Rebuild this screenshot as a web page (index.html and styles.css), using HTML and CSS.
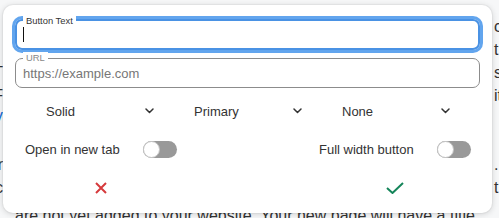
FILE: index.html
```html
<!DOCTYPE html>
<html>
<head>
<meta charset="utf-8">
<link rel="stylesheet" href="styles.css">
</head>
<body>
<div class="page">
  <div class="ln"><span class="l"></span><span class="r">c</span></div>
  <div class="ln"><span class="l"></span><span class="r">t</span></div>
  <div class="ln"><span class="l">T</span><span class="r">si</span></div>
  <div class="ln"><span class="l">F</span><span class="r">it</span></div>
  <div class="ln"><span class="l link">V</span><span class="r"></span></div>
  <div class="ln"><span class="l"></span><span class="r"></span></div>
  <div class="ln"><span class="l">r</span><span class="r">.</span></div>
  <div class="ln"><span class="l">c</span><span class="r">t</span></div>
  <div class="ln last">are not yet added to your website. Your new page will have a title</div>
</div>

<div class="card">
  <div class="field">
    <span class="flabel">Button Text</span>
    <div class="box focused"><span class="caret"></span></div>
  </div>
  <div class="field url">
    <span class="flabel muted">URL</span>
    <div class="box"><span class="ph">https://example.com</span></div>
  </div>

  <div class="selects">
    <div class="sel"><span>Solid</span><svg class="chev" width="9" height="6" viewBox="0 0 9 6"><polyline points="1,1 4.5,4.5 8,1" /></svg></div>
    <div class="sel"><span>Primary</span><svg class="chev" width="9" height="6" viewBox="0 0 9 6"><polyline points="1,1 4.5,4.5 8,1" /></svg></div>
    <div class="sel"><span>None</span><svg class="chev" width="9" height="6" viewBox="0 0 9 6"><polyline points="1,1 4.5,4.5 8,1" /></svg></div>
  </div>

  <div class="pair toggles">
    <div class="tg"><span>Open in new tab</span><span class="switch"><span class="knob"></span></span></div>
    <div class="tg"><span>Full width button</span><span class="switch"><span class="knob"></span></span></div>
  </div>

  <div class="pair actions">
    <div class="act"><svg width="12" height="12" viewBox="0 0 12 12"><path class="x" d="M1 1 L11 11 M11 1 L1 11" /></svg></div>
    <div class="act"><svg width="18" height="12" viewBox="0 0 18 12"><polyline class="ok" points="1,6 6.5,11 17,1" /></svg></div>
  </div>
</div>
</body>
</html>
```

FILE: styles.css
```css
html, body {
  margin: 0;
  padding: 0;
}
body {
  width: 499px;
  height: 218px;
  overflow: hidden;
  background: #f6f7f8;
  font-family: "Liberation Sans", Arial, sans-serif;
  color: #333;
  position: relative;
}
.page {
  padding-top: 15px;
  font-size: 16px;
  line-height: 23px;
  color: #333;
}
.ln {
  display: flex;
  white-space: nowrap;
  height: 23px;
}
.ln .l {
  width: 3px;
  display: flex;
  justify-content: flex-end;
  flex: none;
}
.ln .r {
  margin-left: 491px;
}
.link {
  color: #1a6fd8;
}
.ln.last {
  padding-left: 15px;
  margin-top: 5px;
}

.card {
  position: absolute;
  left: 3px;
  top: 5px;
  width: 489px;
  box-sizing: border-box;
  padding: 14px 12px 9px;
  background: #fff;
  border-radius: 10px;
  box-shadow: 0 1px 6px rgba(0, 0, 0, 0.16), 0 0 0 1px rgba(0, 0, 0, 0.03);
}

.field {
  position: relative;
}
.field.url {
  margin-top: 8px;
}
.box {
  box-sizing: border-box;
  height: 30px;
  border: 1px solid #8c8c8c;
  border-radius: 7px;
  display: flex;
  align-items: center;
  padding-left: 7px;
}
.box.focused {
  height: 31px;
  border: 2px solid #4a92e4;
  box-shadow: 0 0 0 3px #62a5ee;
  padding-left: 6px;
}
.caret {
  width: 1px;
  height: 15px;
  background: #111;
}
.ph {
  font-size: 13px;
  color: #777;
}
.flabel {
  position: absolute;
  left: 8px;
  top: -4px;
  padding: 0 3px;
  background: #fff;
  font-size: 9.4px;
  line-height: 11px;
  color: #333;
}
.flabel.muted {
  top: -6px;
  color: #888;
}

.selects {
  margin-top: 8px;
  display: grid;
  grid-template-columns: 148px 148px 148px;
  height: 30px;
}
.sel {
  display: flex;
  align-items: center;
  padding: 0 9px 0 31px;
  font-size: 13px;
  color: #333;
}
.chev {
  margin-left: auto;
  fill: none;
  stroke: #333;
  stroke-width: 1.5;
  stroke-linecap: round;
  stroke-linejoin: round;
}

.pair {
  display: grid;
  grid-template-columns: 152px 152px;
  justify-content: space-between;
  padding: 0 9px 0 10px;
}
.toggles {
  margin-top: 8px;
  height: 30px;
}
.tg {
  display: flex;
  align-items: center;
  justify-content: space-between;
  font-size: 13px;
  color: #333;
}
.switch {
  width: 34px;
  height: 17px;
  border-radius: 9px;
  background: #999;
  display: flex;
  align-items: center;
}
.knob {
  box-sizing: border-box;
  width: 17px;
  height: 17px;
  border-radius: 50%;
  background: #fff;
  border: 1px solid #c4c4c4;
}

.actions {
  margin-top: 8px;
  height: 32px;
}
.act {
  display: flex;
  align-items: center;
  justify-content: center;
}
.x {
  fill: none;
  stroke: #d63a3c;
  stroke-width: 2;
}
.ok {
  fill: none;
  stroke: #15855a;
  stroke-width: 2;
}
```
